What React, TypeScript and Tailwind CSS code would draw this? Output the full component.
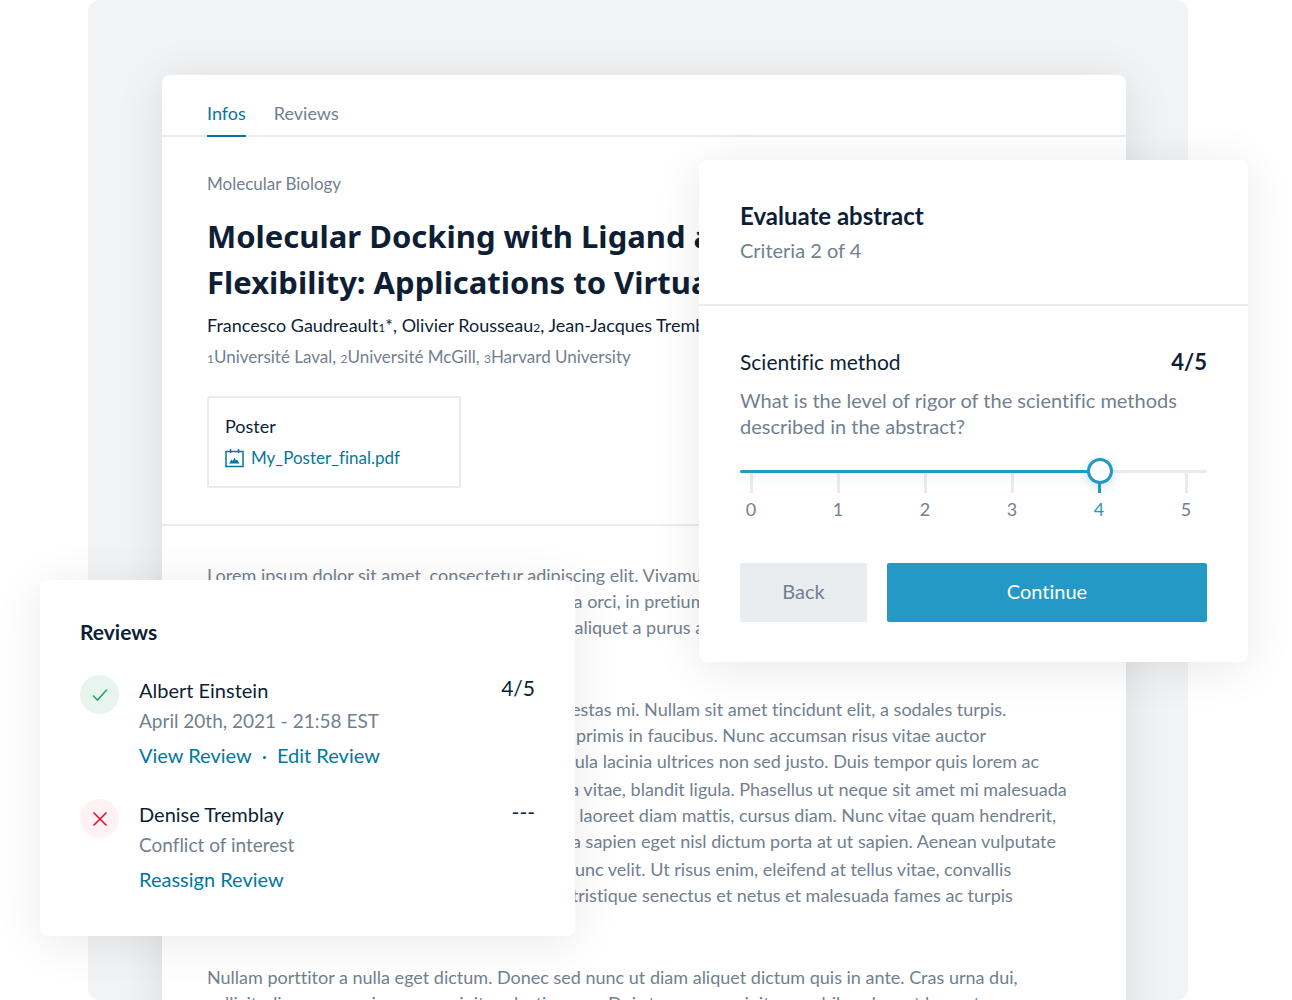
import { useState } from 'react';

const tabs = ['Infos', 'Reviews'];
const scores = [0, 1, 2, 3, 4, 5];

const body = [
  {
    className: '',
    lines: [
      'Lorem ipsum dolor sit amet, consectetur adipiscing elit. Vivamus vel lacus nec nunc',
      'Integer a massa non velit porta aliquet in nunc a orci, in pretium sem viverra',
      'Praesent sit amet ligula posuere egestas nisi a, aliquet a purus at mattis',
    ],
  },
  {
    className: 'mt-14',
    lines: [
      'Donec non ex vitae nibh laoreet porta vitae egestas mi. Nullam sit amet tincidunt elit, a sodales turpis.',
      'Interdum et malesuada fames ac in ante ipsum primis in faucibus. Nunc accumsan risus vitae auctor',
      'Suspendisse at sem et ut nisl interdum et vehicula lacinia ultrices non sed justo. Duis tempor quis lorem ac',
    ],
  },
  {
    className: 'mt-0.5',
    lines: [
      'Curabitur nec risus sed at leo semper placerat a vitae, blandit ligula. Phasellus ut neque sit amet mi malesuada',
      'Vestibulum id lectus eu nisi non egestas cursus laoreet diam mattis, cursus diam. Nunc vitae quam hendrerit,',
      'Mauris at tellus ut lorem massa rhoncus gravida sapien eget nisl dictum porta at ut sapien. Aenean vulputate',
    ],
  },
  {
    className: 'mt-0.5',
    lines: [
      'Etiam quis turpis id arcu vel convallis dapibus nunc velit. Ut risus enim, eleifend at tellus vitae, convallis',
      'Pellentesque habitant morbi dictum massa vel tristique senectus et netus et malesuada fames ac turpis',
    ],
  },
  {
    className: 'mt-14',
    lines: [
      'Nullam porttitor a nulla eget dictum. Donec sed nunc ut diam aliquet dictum quis in ante. Cras urna dui,',
      'sollicitudin non mauris nec, suscipit molestie nunc. Duis tempor suscipit nunc, bibendum at laoreet',
    ],
  },
];

const reviews = [
  {
    name: 'Albert Einstein',
    detail: 'April 20th, 2021 - 21:58 EST',
    score: '4/5',
    done: true,
    actions: ['View Review', 'Edit Review'],
  },
  {
    name: 'Denise Tremblay',
    detail: 'Conflict of interest',
    score: '---',
    done: false,
    actions: ['Reassign Review'],
  },
];

function PosterIcon() {
  return (
    <svg className="h-5 w-5" viewBox="0 0 20 20" fill="none" stroke="currentColor" strokeWidth="1.5" aria-hidden="true">
      <path d="M1 3.500h17v15H1z" />
      <path d="M5.500 1v4M13.500 1v4" />
      <path d="M4 15.500l2.500-4 1.500 1.500 1.500-3.500 1.500 3 1-1 2.500 4z" fill="currentColor" stroke="none" />
    </svg>
  );
}

function StatusIcon({ done }: { done: boolean }) {
  return (
    <div
      className={`flex h-[39px] w-[39px] shrink-0 items-center justify-center rounded-full ${
        done ? 'bg-[#e8f5ef] text-[#22a565]' : 'bg-[#fef2f4] text-[#e3132f]'
      }`}
    >
      <svg className="h-4 w-4" viewBox="0 0 16 16" fill="none" stroke="currentColor" strokeWidth="1.6" aria-hidden="true">
        {done ? <path d="M1 8.500l4.500 4.500L15 2.500" /> : <path d="M1.500 1.500l13 13M14.500 1.500l-13 13" />}
      </svg>
    </div>
  );
}

function Article() {
  const [active, setActive] = useState('Infos');

  return (
    <article className="mt-[75px] mr-[62px] ml-[74px] min-h-full rounded-lg bg-white shadow-[0_6px_48px_rgba(0,0,0,0.1)]">
      <nav className="flex gap-7 border-b-2 border-[#e9ecef] px-[45px] pt-6">
        {tabs.map((tab) => (
          <button
            key={tab}
            onClick={() => setActive(tab)}
            className={`-mb-0.5 border-b-2 pb-2 text-lg ${
              active === tab ? 'border-[#05779e] text-[#05779e]' : 'border-transparent text-[#72808f]'
            }`}
          >
            {tab}
          </button>
        ))}
      </nav>

      <header className="border-b-2 border-[#e9ecef] px-[45px] pt-[35px] pb-9 whitespace-nowrap">
        <p className="text-[17px] leading-6 text-[#72808f]">Molecular Biology</p>
        <h1 className="mt-[17px] font-['Noto_Sans',sans-serif] text-[31px] leading-[46px] font-bold text-[#0e1f35]">
          Molecular Docking with Ligand and
          <br />
          Flexibility: Applications to Virtual
        </h1>
        <p className="mt-2 text-lg leading-6 text-[#0e1f35]">
          Francesco Gaudreault<small className="text-xs">1</small>*, Olivier Rousseau
          <small className="text-xs">2</small>, Jean-Jacques Tremblay
        </p>
        <p className="mt-2 text-[17px] leading-6 text-[#72808f]">
          <small className="text-xs">1</small>Université Laval, <small className="text-xs">2</small>Université McGill,{' '}
          <small className="text-xs">3</small>Harvard University
        </p>
        <div className="mt-[27px] w-[254px] rounded-xs border-2 border-[#e9ecef] p-4">
          <p className="text-lg leading-6 text-[#0e1f35]">Poster</p>
          <a href="#poster" className="mt-2 flex items-center gap-1.5 text-[17px] leading-6 text-[#05779e]">
            <PosterIcon />
            My_Poster_final.pdf
          </a>
        </div>
      </header>

      <div className="px-[45px] pt-9 text-lg leading-[26px] whitespace-nowrap text-[#72808f]">
        {body.map((block, i) => (
          <p key={i} className={block.className}>
            {block.lines.map((line) => (
              <span key={line} className="block">
                {line}
              </span>
            ))}
          </p>
        ))}
      </div>
    </article>
  );
}

function EvaluateCard() {
  const [score, setScore] = useState(4);

  return (
    <section className="absolute top-40 right-11 w-[549px] rounded-lg bg-white shadow-[0_6px_48px_rgba(0,0,0,0.09)]">
      <div className="border-b-2 border-[#e9ecef] px-[41px] py-10">
        <h2 className="text-2xl leading-8 font-bold text-[#0e1f35]">Evaluate abstract</h2>
        <p className="mt-1 text-xl leading-7 text-[#72808f]">Criteria 2 of 4</p>
      </div>

      <div className="px-[41px] py-10">
        <div className="flex items-center justify-between text-[#0e1f35]">
          <label htmlFor="score" className="text-[21px] leading-8">
            Scientific method
          </label>
          <output htmlFor="score" className="text-[22px] leading-8 font-bold">
            {score}/5
          </output>
        </div>
        <p className="mt-[9px] text-xl leading-[26px] text-[#72808f]">
          What is the level of rigor of the scientific methods described in the abstract?
        </p>

        <div className="relative mt-[31px] h-[3px] rounded-full bg-[#e9ecef]">
          <div
            className="h-[3px] rounded-full bg-[#2499c5] shadow-[0_4px_10px_rgba(36,153,197,0.2)]"
            style={{ width: `${score * 18.6 + 2.4}%` }}
          />
          <input
            id="score"
            type="range"
            min={0}
            max={5}
            value={score}
            onChange={(e) => setScore(Number(e.target.value))}
            className="absolute -top-3 right-2 -left-0.5 z-10 h-[26px] w-[462px] cursor-pointer appearance-none bg-transparent [&::-webkit-slider-thumb]:h-[26px] [&::-webkit-slider-thumb]:w-[26px] [&::-webkit-slider-thumb]:appearance-none [&::-webkit-slider-thumb]:rounded-full [&::-webkit-slider-thumb]:border-[3px] [&::-webkit-slider-thumb]:border-[#2499c5] [&::-webkit-slider-thumb]:bg-white [&::-webkit-slider-thumb]:shadow-[0_4px_10px_rgba(36,153,197,0.2)]"
          />
        </div>
        <div className="mr-2 -ml-0.5 flex justify-between text-lg leading-6">
          {scores.map((n) => (
            <div
              key={n}
              className={`flex w-[26px] flex-col items-center ${n === score ? 'text-[#2499c5]' : 'text-[#72808f]'}`}
            >
              <span className={`h-5 w-[3px] ${n === score ? 'bg-[#2499c5]' : 'bg-[#e9ecef]'}`} />
              <span className="mt-1">{n}</span>
            </div>
          ))}
        </div>

        <div className="mt-[42px] flex gap-5 text-xl">
          <button className="h-[59px] w-[127px] rounded-xs bg-[#e9edf0] pb-1 text-[#72808f]">Back</button>
          <button className="h-[59px] flex-1 rounded-xs bg-[#2499c5] pb-1 text-white">Continue</button>
        </div>
      </div>
    </section>
  );
}

function ReviewsCard() {
  return (
    <section className="absolute top-[580px] left-10 w-[535px] rounded-lg bg-white px-10 pt-10 pb-[41px] shadow-[0_6px_48px_rgba(0,0,0,0.09)]">
      <h2 className="text-[21px] leading-6 font-bold text-[#0e1f35]">Reviews</h2>
      <ul className="mt-[31px] flex flex-col gap-7">
        {reviews.map((review) => (
          <li key={review.name} className="flex gap-5">
            <StatusIcon done={review.done} />
            <div className="flex-1 text-xl">
              <p className="leading-[30px] text-[#0e1f35]">{review.name}</p>
              <p className="text-[19px] leading-8 text-[#72808f]">{review.detail}</p>
              <p className="mt-0.5 flex gap-2.5 leading-8 text-[#05779e]">
                {review.actions.map((action, i) => (
                  <span key={action} className="flex gap-2.5">
                    {i > 0 && <span>·</span>}
                    <a href="#review">{action}</a>
                  </span>
                ))}
              </p>
            </div>
            <p className="text-[21px] leading-[26px] text-[#0e1f35]">{review.score}</p>
          </li>
        ))}
      </ul>
    </section>
  );
}

export default function App() {
  return (
    <main className="relative h-screen overflow-hidden bg-white pr-[104px] pl-[88px] font-['Lato',sans-serif] [font-variant-ligatures:none]">
      <div className="flow-root h-full overflow-hidden rounded-xl bg-[#f2f3f5]">
        <Article />
      </div>
      <EvaluateCard />
      <ReviewsCard />
    </main>
  );
}
